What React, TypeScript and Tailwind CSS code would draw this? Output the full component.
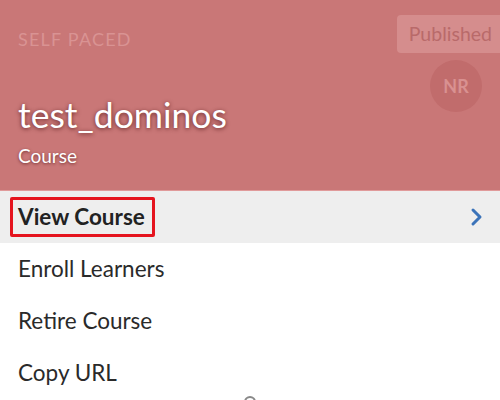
import React from "react";

export default function App() {
  return (
    <div className="w-[500px] h-[400px] overflow-hidden bg-white relative" style={{ fontFamily: "Lato, 'Open Sans', sans-serif" }}>
      <div className="h-[191px] bg-[#c97777] relative flex flex-col px-[18px] border-b border-[#e09a9a]">
        <div className="pt-[27px] text-[18px] leading-[24px] tracking-[1.2px] text-[#d99393]">SELF PACED</div>
        <div className="absolute right-0 top-[15px] h-[38px] pl-[12px] pr-[8px] rounded-l-[4px] bg-[#d58d8d] text-[#b96a6a] text-[19.5px] leading-[38px]">Published</div>
        <div className="absolute left-[430px] top-[60px] w-[52px] h-[52px] rounded-full bg-[#c16c6c] flex items-center justify-center text-[#d99191] text-[18px] font-bold">NR</div>
        <div className="mt-[44px] text-[35.5px] leading-[40px] text-white [text-shadow:0_1px_4px_rgba(80,20,20,0.8)]">test_dominos</div>
        <div className="mt-[10px] text-[19px] leading-[22px] text-white [text-shadow:0_1px_3px_rgba(80,20,20,0.7)]">Course</div>
      </div>
      <div className="h-[52px] bg-[#eeeeee] flex items-center justify-between pl-[10px] pr-[16px]">
        <div className="border-[3px] border-[#e5141e] rounded-[2px] pl-[5px] pr-[7px] h-[40px] flex items-center text-[22.5px] font-bold text-[#222]">View Course</div>
        <svg width="14" height="20" viewBox="0 0 14 20" fill="none">
          <path d="M3 3 L10 10 L3 17" stroke="#3b73b9" strokeWidth="3" strokeLinecap="round" strokeLinejoin="round" />
        </svg>
      </div>
      <div className="h-[52px] flex items-center px-[18px] text-[22.5px] text-[#2a2a2a]">Enroll Learners</div>
      <div className="h-[52px] flex items-center px-[18px] text-[22.5px] text-[#2a2a2a]">Retire Course</div>
      <div className="h-[52px] flex items-center px-[18px] text-[22.5px] text-[#2a2a2a]">Copy URL</div>
      <div className="absolute left-[244px] top-[396px] w-[12px] h-[12px] rounded-full border-2 border-[#888]" />
    </div>
  );
}
